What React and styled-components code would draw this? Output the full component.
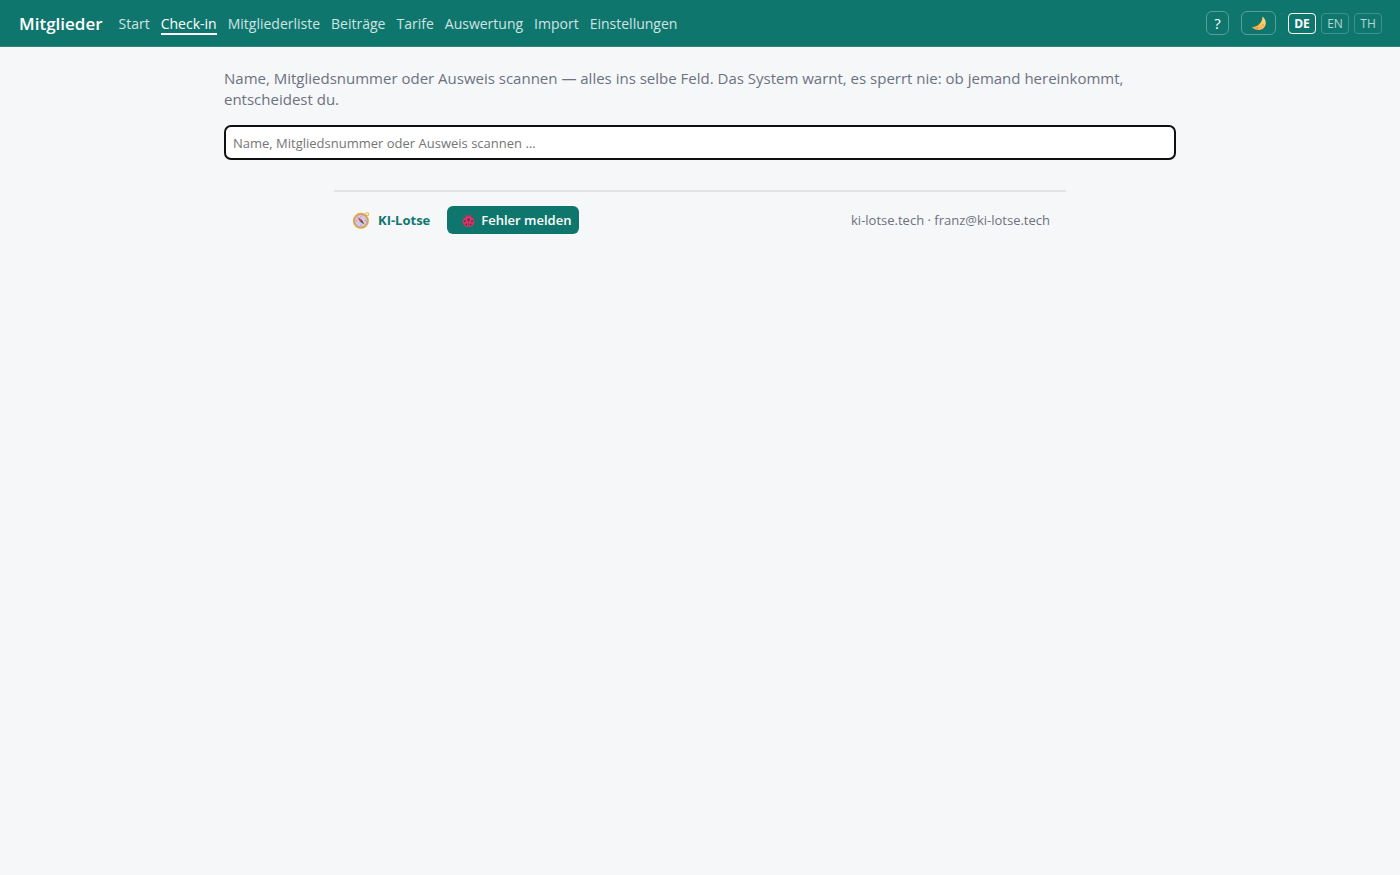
import React, { useEffect, useRef, useState } from 'react'
import styled, { createGlobalStyle } from 'styled-components'

const GlobalStyle = createGlobalStyle`
  * {
    box-sizing: border-box;
  }
  body {
    margin: 0;
    background: #f6f7f9;
    font-family: 'Open Sans', 'Noto Sans', sans-serif;
    font-size: 15px;
    line-height: 21px;
  }
  button, input {
    font-family: inherit;
  }
`
const TopBar = styled.header`
  display: flex;
  align-items: center;
  gap: 16px;
  height: 47px;
  padding: 0 18px 0 19px;
  background: #0f766e;
  border-bottom: 1px solid #2b877f;
  color: white;
`
const Brand = styled.strong`
  font-size: 17px;
  font-weight: 600;
`
const Nav = styled.nav`
  display: flex;
  flex: 1;
  gap: 11px;
`
const NavLink = styled.a`
  padding-top: 4px;
  font-size: 14px;
  line-height: 18px;
  text-decoration: none;
  color: ${(props) => props.$active ? 'white' : '#cfe4e2'};
  border-bottom: 2px solid ${(props) => props.$active ? 'white' : 'transparent'};
`
const Tools = styled.div`
  display: flex;
  align-items: center;
  gap: 12px;
`
const ToolButton = styled.button`
  display: flex;
  align-items: center;
  justify-content: center;
  width: ${(props) => props.$wide ? '35px' : '23px'};
  height: 24px;
  padding: 0;
  color: white;
  font-size: 15px;
  background: transparent;
  border: 1px solid #579f99;
  border-radius: 6px;
  cursor: pointer;
`
const LangGroup = styled.div`
  display: flex;
  gap: 5px;
`
const LangButton = styled.button`
  width: 28px;
  height: 21px;
  padding: 0;
  font-size: 12px;
  line-height: 19px;
  font-weight: ${(props) => props.$active ? 700 : 400};
  color: ${(props) => props.$active ? 'white' : '#b7d6d3'};
  background: transparent;
  border: 1px solid ${(props) => props.$active ? 'white' : '#3f918b'};
  border-radius: 4px;
  cursor: pointer;
`
const Main = styled.main`
  max-width: 984px;
  margin: 0 auto;
  padding: 21px 16px 0;
`
const Intro = styled.p`
  margin: 0 0 15px;
  color: #6b7280;
`
const SearchInput = styled.input`
  display: block;
  width: 100%;
  height: 35px;
  padding: 0 7px;
  font-size: 13px;
  color: #1f2937;
  background: white;
  border: 2px solid #101010;
  border-radius: 7px;
  outline: none;
  &::placeholder {
    color: #757575;
  }
`
const Footer = styled.footer`
  display: flex;
  align-items: center;
  gap: 17px;
  max-width: 732px;
  margin: 30px auto 0;
  padding: 14px 16px 14px 18px;
  font-size: 13px;
  color: #6b7280;
  border-top: 2px solid #e1e3e6;
`
const FooterBrand = styled.a`
  display: flex;
  align-items: center;
  gap: 7px;
  font-weight: 700;
  color: #0f766e;
  text-decoration: none;
`
const ReportButton = styled.button`
  display: flex;
  align-items: center;
  gap: 5px;
  height: 28px;
  padding: 0 8px 0 14px;
  font-size: 13px;
  font-weight: 600;
  color: white;
  background: #0f766e;
  border: none;
  border-radius: 6px;
  cursor: pointer;
`
const Contact = styled.div`
  margin-left: auto;
`
const ContactLink = styled.a`
  color: inherit;
  text-decoration: none;
`

const MoonIcon = () => (
    <svg width='16' height='16' viewBox='0 0 16 16' aria-hidden='true'>
        <defs>
            <linearGradient id='moonFill' x1='0' y1='1' x2='1' y2='0'>
                <stop offset='0' stopColor='#f59a4c' />
                <stop offset='0.6' stopColor='#fcc85c' />
                <stop offset='1' stopColor='#ffe08a' />
            </linearGradient>
        </defs>
        <path d='M11.300 1.600C15.400 4.400 15.900 9.800 12.700 12.900C9.300 16.200 3.500 15.500 0.900 12C4.500 12 7.300 10.600 9.100 8.300C10.800 6.200 11.800 4 11.300 1.600Z' fill='url(#moonFill)' />
        <circle cx='6.500' cy='13.100' r='0.800' fill='#e58b45' />
        <circle cx='12' cy='9.900' r='0.900' fill='#eba04d' />
    </svg>
)

const CompassIcon = () => (
    <svg width='19' height='20' viewBox='0 0 19 20' aria-hidden='true'>
        <circle cx='15.200' cy='4.200' r='1.500' fill='none' stroke='#edb64b' strokeWidth='1.100' />
        <circle cx='8.900' cy='10.800' r='7.200' fill='#d5cbdd' stroke='#e4a536' strokeWidth='1.600' />
        <circle cx='8.900' cy='10.800' r='6.100' fill='none' stroke='#a78bb0' strokeWidth='0.500' />
        <path d='M5.400 7.100L9.900 9.800L8 11.800Z' fill='#e6365d' />
        <path d='M12.400 14.500L8 11.800L9.900 9.800Z' fill='#55505f' />
        <path d='M8.900 5.800V7.100M8.900 14.500V15.800M3.900 10.800H5.200M12.600 10.800H13.900' stroke='#897b97' strokeWidth='0.600' />
    </svg>
)

const LadybugIcon = () => (
    <svg width='15' height='15' viewBox='0 0 15 15' aria-hidden='true'>
        <path d='M5.400 3.400L4.400 1.800M9.600 3.400L10.600 1.800M3 6L1.500 4.800M12 6L13.500 4.800M2.400 9H1M12.600 9H14M3.400 12L2 13.200M11.600 12L13 13.200' stroke='#a33a60' strokeWidth='0.900' />
        <ellipse cx='7.500' cy='4.100' rx='3.200' ry='2.200' fill='#b33560' />
        <ellipse cx='7.500' cy='8.700' rx='5.700' ry='5.200' fill='#e0336a' />
        <path d='M7.500 5V13.900' stroke='#6d3752' strokeWidth='0.600' />
        <circle cx='7.500' cy='6.800' r='1.300' fill='#513449' />
        <circle cx='4' cy='8.300' r='1' fill='#513449' />
        <circle cx='11' cy='8.300' r='1' fill='#513449' />
        <circle cx='5.300' cy='11.500' r='0.900' fill='#513449' />
        <circle cx='9.700' cy='11.500' r='0.900' fill='#513449' />
    </svg>
)

const navItems = ['Start', 'Check-in', 'Mitgliederliste', 'Beiträge', 'Tarife', 'Auswertung', 'Import', 'Einstellungen']
const languages = ['DE', 'EN', 'TH']

const App = () => {

    const [active, setActive] = useState('Check-in');
    const [lang, setLang] = useState('DE');
    const [query, setQuery] = useState('');
    const searchRef = useRef(null);

    // The scanner types straight into the field
    useEffect(() => {
        searchRef.current?.focus();
    }, []);

    return (
        <>
            <GlobalStyle />
            <TopBar>
                <Brand>Mitglieder</Brand>
                <Nav>
                    {navItems.map((item) => (
                        <NavLink
                            key={item}
                            href='#'
                            $active={item === active}
                            onClick={() => setActive(item)}>
                            {item}
                        </NavLink>
                    ))}
                </Nav>
                <Tools>
                    <ToolButton type='button'>?</ToolButton>
                    <ToolButton type='button' $wide>
                        <MoonIcon />
                    </ToolButton>
                    <LangGroup>
                        {languages.map((code) => (
                            <LangButton
                                key={code}
                                type='button'
                                $active={code === lang}
                                onClick={() => setLang(code)}>
                                {code}
                            </LangButton>
                        ))}
                    </LangGroup>
                </Tools>
            </TopBar>
            <Main>
                <Intro id='search-intro'>
                    Name, Mitgliedsnummer oder Ausweis scannen — alles ins selbe Feld. Das System warnt, es sperrt nie: ob jemand hereinkommt, entscheidest du.
                </Intro>
                <SearchInput
                    ref={searchRef}
                    type='text'
                    aria-labelledby='search-intro'
                    placeholder='Name, Mitgliedsnummer oder Ausweis scannen …'
                    value={query}
                    onChange={(e) => setQuery(e.target.value)} />
            </Main>
            <Footer>
                <FooterBrand href='#'>
                    <CompassIcon />
                    KI-Lotse
                </FooterBrand>
                <ReportButton type='button'>
                    <LadybugIcon />
                    Fehler melden
                </ReportButton>
                <Contact>
                    <ContactLink href='#'>ki-lotse.tech</ContactLink>
                    {' · '}
                    <ContactLink href='#'>franz@ki-lotse.tech</ContactLink>
                </Contact>
            </Footer>
        </>
    )
}

export default App
